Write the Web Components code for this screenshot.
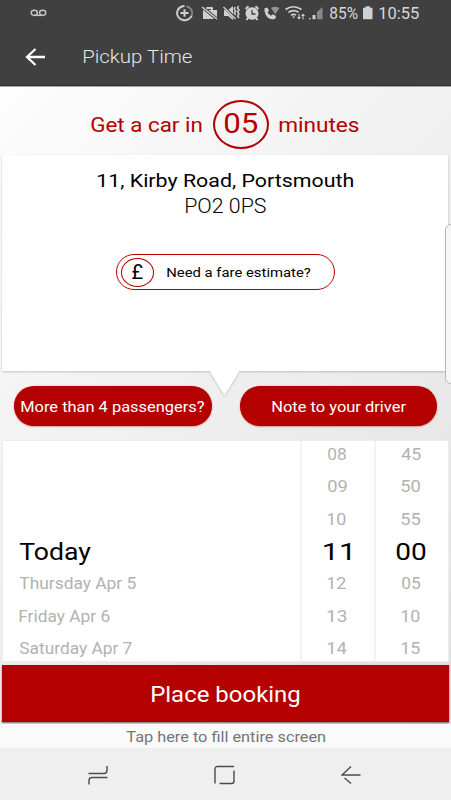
<!DOCTYPE html>
<html lang="en">
<head>
<meta charset="utf-8">
<title>Pickup Time</title>
<style>
html,body{margin:0;padding:0;height:100%;overflow:hidden;background:#efefef;font-family:Roboto,"Liberation Sans",sans-serif}
</style>
</head>
<body>
<booking-screen></booking-screen>
<script>
const define = (name, html) => {
  const t = document.createElement('template');
  t.innerHTML = html;
  customElements.define(name, class extends HTMLElement {
    constructor() {
      super();
      this.attachShadow({mode: 'open'}).append(t.content.cloneNode(true));
    }
  });
};

/* Label whose glyphs are stretched horizontally to a given width. */
const measure = document.createElement('canvas').getContext('2d');
class FitText extends HTMLElement {
  connectedCallback() {
    const size = this.getAttribute('size');
    const weight = this.getAttribute('weight') || 400;
    const width = +this.getAttribute('w');
    const text = this.getAttribute('text');
    measure.font = `${weight} ${size}px Roboto, "Liberation Sans", sans-serif`;
    const m = measure.measureText(text);
    const k = width / (m.actualBoundingBoxLeft + m.actualBoundingBoxRight);
    if (!this.shadowRoot) this.attachShadow({mode: 'open'});
    this.shadowRoot.innerHTML = `<style>
      :host{display:block;flex:none;width:${width}px;height:24px;line-height:24px;white-space:nowrap;font-size:${size}px;font-weight:${weight}}
      span{display:inline-block;vertical-align:top;transform-origin:0 50%;transform:translateX(${m.actualBoundingBoxLeft * k + .3}px) scaleX(${k})}
    </style><span></span>`;
    this.shadowRoot.querySelector('span').textContent = text;
  }
}
customElements.define('fit-text', FitText);

define('status-bar', `<style>
  :host{display:flex;align-items:center;height:27px;color:#d8d8d8;box-sizing:border-box;padding-left:30px}
  svg{display:block;flex:none}
  .clock{margin-left:5px}
</style>
<svg width="17" height="27" viewBox="30 0 17 27" fill="none" stroke="#c8c8c8" stroke-width="1.4"><ellipse cx="34.3" cy="12.8" rx="3.1" ry="2.6"/><ellipse cx="42.7" cy="12.8" rx="3.1" ry="2.6"/><path d="M34 15.4h9"/></svg>
<svg style="margin-left:123px" width="159" height="27" viewBox="170 0 159 27" fill="#d0d0d0">
  <g fill="none" stroke="#d0d0d0" stroke-width="2"><path d="M184.500 6a7.600 7.100 0 1 0 7.300 9.500"/><path d="M186.500 6.200a7.600 7.100 0 0 1 5.300 9.300" stroke="#858585"/><path d="M180.500 13h8M184.500 9.300v7.400"/></g>
  <path d="M203 10h3V8q0-1 1-1h5q1 0 1 1v2h4v9h-14zM208 10h3V9h-3z"/><path d="M201 6l17 14" stroke="#404040" stroke-width="3"/><path d="M202 7l15 12" stroke="#d0d0d0" stroke-width="1.500"/>
  <path d="M224 10h4l5-4v14l-5-4h-4z"/><path d="M222 5l15 15" stroke="#404040" stroke-width="2.600"/><path d="M223.500 7l12 12" stroke="#d0d0d0" stroke-width="1.400"/><path d="M235.200 7l-1 2 1.500 2-1.500 2 1.500 2M238.500 6l-1 2 1.500 2-1.500 2 1.500 2-1.500 2 1.500 2" fill="none" stroke="#d0d0d0" stroke-width="1.500"/>
  <ellipse cx="252" cy="13.500" rx="6.500" ry="6.200"/><path d="M245.500 9l3-2.700M258.500 9l-3-2.700M248 18l-1.500 2M256 18l1.500 2" stroke="#d0d0d0" stroke-width="2"/><path d="M252 10v4h3.500" fill="none" stroke="#404040" stroke-width="1.300"/>
  <path d="M264.500 8.300l3-.8 1.500 3.500-1.500 1.300q1 2.500 3.500 3.500l1.800-1.500 3.300 1.800-1 2.900q-6.500 1.500-9.500-4.500-1.500-3-1.100-6.200z"/><path d="M271 8q4-2.500 8.500 0l-4.200 6.200z" fill="#929292"/>
  <g fill="none" stroke="#d0d0d0" stroke-width="1.700"><path d="M285.500 9.500q7.500-5.500 16 0M288.300 12.400q5-3.500 10.300-.2M291 15.200q2.700-1.800 5 0"/><path d="M299 14v5M303 19.500v-5" stroke-width="1"/></g><path d="M292.200 16.500h3l-1.500 2zM297 17h4l-2 2.600zM301 16h4l-2-2.600z"/>
  <path d="M309 18h1.500v1.300H309zM312.500 15h3v4.300h-3z"/><path d="M317 12l5.500-5v12.300H317z" fill="#888"/>
</svg>
<fit-text text="85%" size="16" w="29"></fit-text>
<svg style="margin-left:4px" width="12" height="27" viewBox="0 0 12 27" fill="#d0d0d0"><path d="M3.500 6.300h4.500v1.500h2.500v11.500H1V7.800h2.500z"/></svg>
<fit-text class="clock" text="10:55" size="16" w="40"></fit-text>`);

define('app-header', `<style>
  :host{display:block;height:86px;box-sizing:border-box;background:#404040;border-bottom:1px solid #303030;color:#e6e6e6}
  div{display:flex;align-items:center;height:59px;padding-left:25px}
  svg{display:block;margin-right:37px}
</style>
<status-bar></status-bar>
<div><svg width="21" height="18" viewBox="0 0 21 18" fill="none" stroke="#fff" stroke-width="2.300"><path d="M20 9H2M10.500 1L2 9l8.500 8"/></svg>
<fit-text text="Pickup Time" size="18.300" weight="300" w="109"></fit-text></div>`);

define('car-eta', `<style>
  :host{display:flex;align-items:center;height:69px;padding:8px 0 0 91px;box-sizing:border-box;color:#b50000;border-top:1px solid #a8a8a8}
  .ring{display:flex;align-items:center;justify-content:center;box-sizing:border-box;width:56px;height:49px;border:2px solid #b50000;border-radius:50%;margin:-2px 10px 0 11.500px}
  .side{margin-top:2px}
</style>
<fit-text class="side" text="Get a car in" size="19.800" w="110.500"></fit-text>
<div class="ring"><fit-text text="05" size="27.500" w="33.500"></fit-text></div>
<fit-text class="side" text="minutes" size="19.800" w="80"></fit-text>`);

define('fare-button', `<style>
  :host{display:flex;align-items:center;box-sizing:border-box;width:219px;height:36px;border:1.400px solid #b50000;border-radius:18px;padding-left:4px;background:#fff}
  div{display:flex;align-items:center;justify-content:center;box-sizing:border-box;width:33.500px;height:29px;border:1px solid #b50000;border-radius:50%;margin-right:13px}
</style>
<div><fit-text text="£" size="20" w="12"></fit-text></div>
<fit-text text="Need a fare estimate?" size="13.700" w="143"></fit-text>`);

define('address-card', `<style>
  :host{display:flex;flex-direction:column;align-items:center;position:relative;margin:0 3px 0 2px;height:216px;box-sizing:border-box;padding-top:14px;color:#000;filter:drop-shadow(0 1px 1px #0003);background:#fff}
  .postcode{margin-top:1.500px}
  fare-button{margin-top:35.500px}
  .tail{position:absolute;left:207px;top:100%;display:block}
</style>
<fit-text text="11, Kirby Road, Portsmouth" size="19" w="256.500"></fit-text>
<fit-text class="postcode" text="PO2 0PS" size="19.500" weight="300" w="80.500"></fit-text>
<fare-button></fare-button>
<svg class="tail" width="31" height="25"><path d="M0-1H31L15.500 24.500z" fill="#fff"/></svg>`);

define('pill-button', `<style>
  :host{display:flex;align-items:center;justify-content:center;box-sizing:border-box;width:197.500px;height:40px;border-radius:20px;background:#b50000;color:#fff;box-shadow:0 .5px 1.500px #b5000099;padding-top:2.500px}
</style><slot></slot>`);

class WheelColumn extends HTMLElement {
  connectedCallback() {
    const rows = this.getAttribute('rows').split('|').map(r => r.split(':'));
    this.attachShadow({mode: 'open'}).innerHTML = `<style>
      :host{display:block;background:#fff;overflow:hidden;color:#b2b2b2;height:220px}
      div{display:flex;align-items:center;height:32.400px;justify-content:center;padding-right:2px}
      :host([days]) div{justify-content:flex-start;padding-left:16px}
      .on{color:#000}
      section{margin-top:-1.900px}
    </style><section>${rows.map(([t, w], i) =>
      `<div class="${i === 3 ? 'on' : ''}">${t ? `<fit-text text="${t}" w="${w}" size="${i === 3 ? 24.5 : 16}"></fit-text>` : ''}</div>`).join('')}</section>`;
  }
}
customElements.define('wheel-column', WheelColumn);

define('date-time-wheels', `<style>
  :host{display:grid;grid-template-columns:297px 72.500px 72.500px;gap:1.500px;margin:0 3px;height:220px;background:#f3f3f3;outline:1px solid #ededed}
</style>
<wheel-column days rows="|||Today:72|Thursday Apr 5:117|Friday Apr 6:91|Saturday Apr 7:113"></wheel-column>
<wheel-column rows="08:19.5|09:19.5|10:19|11:26|12:19|13:19|14:19.5"></wheel-column>
<wheel-column rows="45:20|50:19.5|55:19.5|00:29.5|05:19.5|10:19|15:19"></wheel-column>`);

define('book-button', `<style>
  :host{display:flex;align-items:center;justify-content:center;height:56.500px;margin:4.500px 2px 0;background:#b50000;color:#fff;box-shadow:0 1px 1.500px #0008;box-sizing:border-box;padding-top:3px}
</style><fit-text text="Place booking" size="21.200" w="148.500"></fit-text>`);

define('fill-hint', `<style>
  :host{display:flex;align-items:center;justify-content:center;height:24px;padding-top:1px;box-sizing:border-box;background:#fafafa;color:#757575}
</style><fit-text text="Tap here to fill entire screen" size="15" w="199.500"></fit-text>`);

define('nav-bar', `<style>
  :host{display:flex;align-items:center;justify-content:space-between;height:52px;background:#efefef;padding:1px 90px 0 88px;box-sizing:border-box}
  svg{fill:none;stroke:#4c4c4c;stroke-width:1.400}
</style>
<svg width="20" height="20" viewBox="0 0 20 20"><path d="M.5 8.500H16q3 0 3-3V1M19.500 12.500H4q-3 0-3 3v4"/></svg>
<svg width="21" height="20" viewBox="0 0 21 20"><path d="M1 18.500V4q0-2.500 2.500-2.500H20M20 5.500V16q0 2.500-2.500 2.500H5.500"/></svg>
<svg width="20" height="20" viewBox="0 0 20 20"><path d="M10 1.500L1 10H19.500M3.500 13L10 18.500"/></svg>`);

define('edge-handle', `<style>
  :host{display:block;position:absolute;left:445px;top:224px;width:20px;height:160px;box-sizing:border-box;border:1px solid #b5b5b5;border-radius:6px;background:#f6f6f6}
</style>`);

define('booking-screen', `<style>
  :host{display:block;position:relative;width:451px;height:800px;overflow:hidden}
  main{height:638px;background:linear-gradient(135deg,#fdfdfd 0%,#f7f7f7 20%,#ececec 58%,#dedede 100%)}
  .actions{display:flex;justify-content:space-between;padding:14.500px 14px 15px;height:40px}
</style>
<app-header></app-header>
<main>
  <car-eta></car-eta>
  <address-card></address-card>
  <div class="actions">
    <pill-button><fit-text text="More than 4 passengers?" size="15.300" w="183"></fit-text></pill-button>
    <pill-button><fit-text text="Note to your driver" size="15.300" w="133.500"></fit-text></pill-button>
  </div>
  <date-time-wheels></date-time-wheels>
  <book-button></book-button>
</main>
<fill-hint></fill-hint>
<nav-bar></nav-bar>
<edge-handle></edge-handle>`);
</script>
</body>
</html>
